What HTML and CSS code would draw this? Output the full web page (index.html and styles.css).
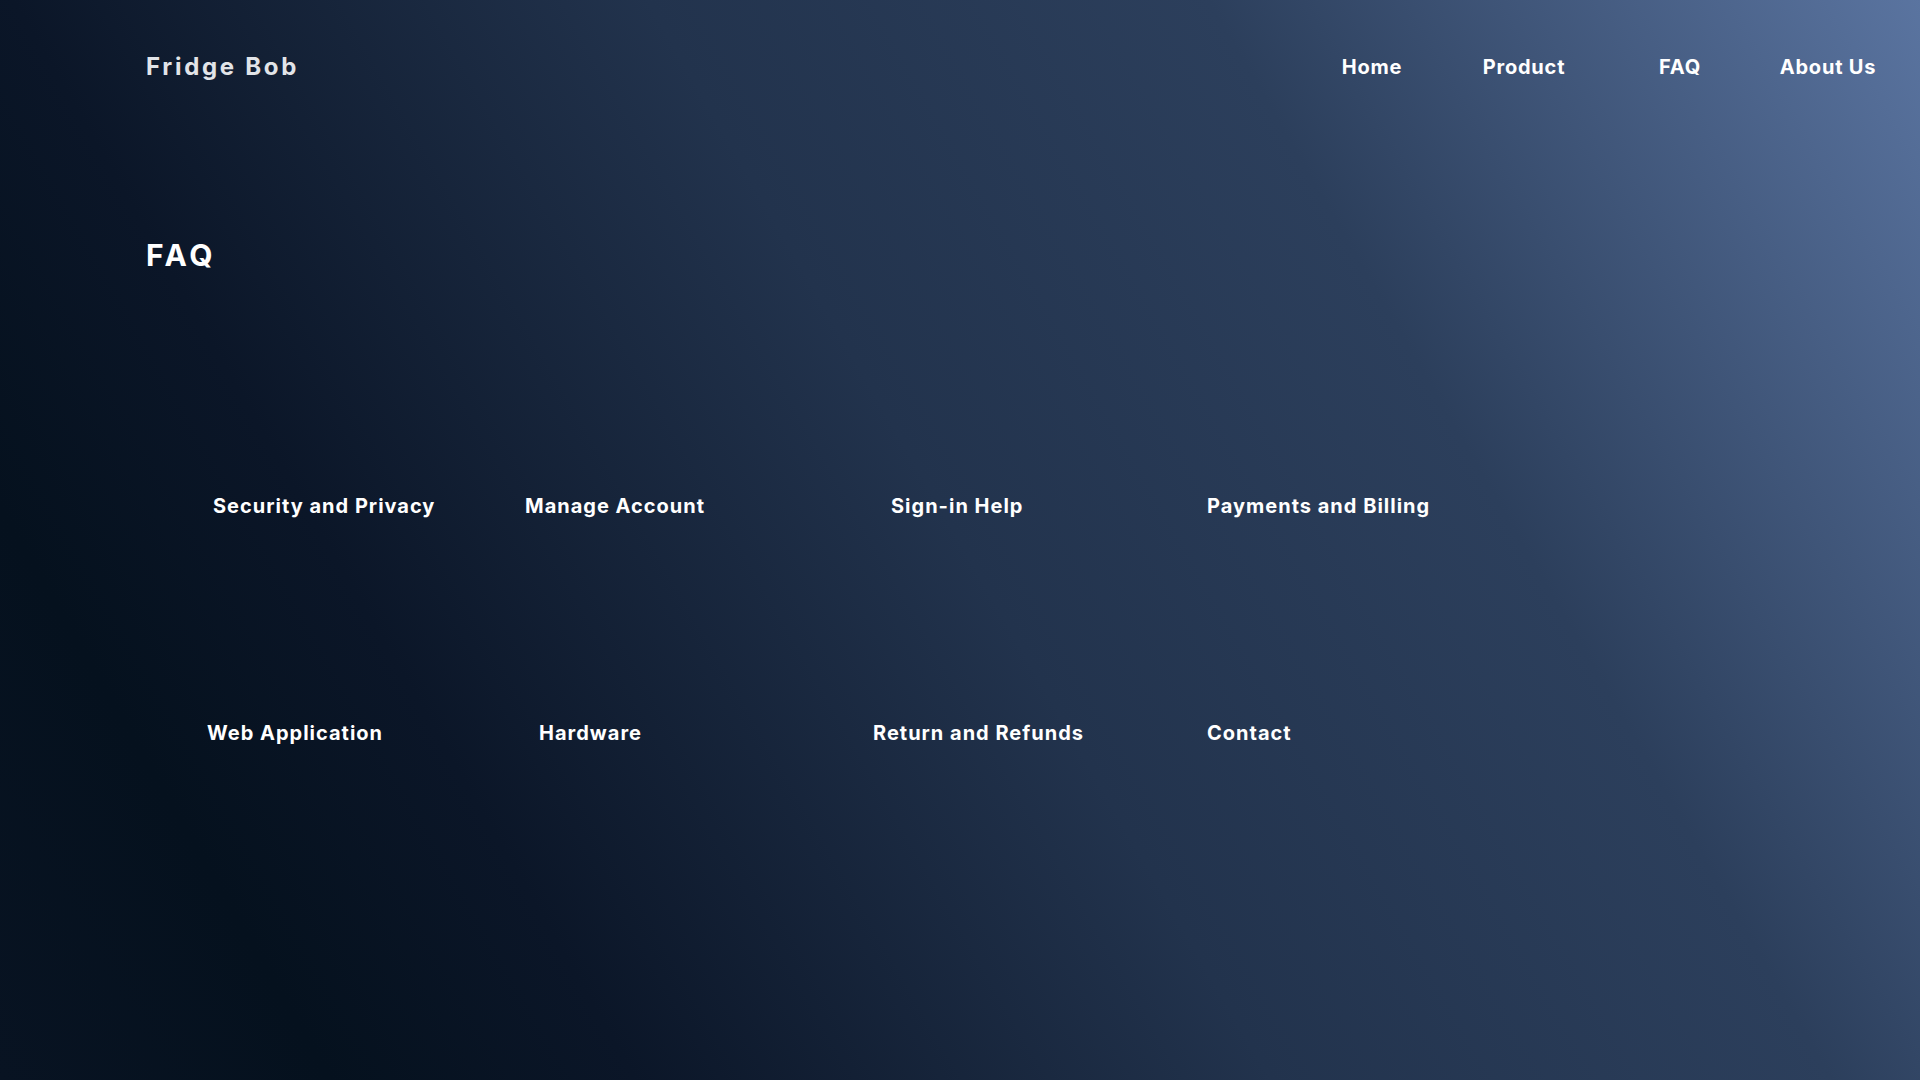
FILE: index.html
```html
<!DOCTYPE html>
<html lang="en">
<head>
<meta charset="utf-8">
<title>Fridge Bob - FAQ</title>
<link rel="stylesheet" href="styles.css">
</head>
<body>
<div class="page">
  <header class="topbar">
    <div class="logo">Fridge Bob</div>
    <nav class="nav">
      <a class="nav-link" href="#">Home</a>
      <a class="nav-link" href="#">Product</a>
      <a class="nav-link" href="#">FAQ</a>
      <a class="nav-link" href="#">About Us</a>
    </nav>
  </header>
  <main class="content">
    <h1 class="title">FAQ</h1>
    <div class="topics">
      <div class="row row-first">
        <a class="topic" href="#">Security and Privacy</a>
        <a class="topic" href="#">Manage Account</a>
        <a class="topic" href="#">Sign-in Help</a>
        <a class="topic" href="#">Payments and Billing</a>
      </div>
      <div class="row row-second">
        <a class="topic" href="#">Web Application</a>
        <a class="topic" href="#">Hardware</a>
        <a class="topic" href="#">Return and Refunds</a>
        <a class="topic" href="#">Contact</a>
      </div>
    </div>
  </main>
</div>
</body>
</html>
```
FILE: styles.css
```css
* { box-sizing: border-box; }
html, body { margin: 0; padding: 0; }
body {
  font-family: "Inter", "Open Sans", sans-serif;
  color: #ffffff;
  min-height: 1080px;
  background: linear-gradient(60deg, #081322 0%, #05111e 13%, #0b1628 25%, #22334d 50%, #2c3f5c 72%, #5a74a0 100%);
}
.page { height: 1080px; overflow: hidden; }
a { color: inherit; text-decoration: none; }
.topbar {
  display: flex;
  justify-content: space-between;
  align-items: flex-start;
  padding: 51px 16px 0 146px;
  height: 110px;
}
.logo {
  font-size: 24px;
  font-weight: 700;
  letter-spacing: 2.7px;
  color: #e2e4e8;
  line-height: 32px;
}
.nav { display: flex; }
.nav-link {
  width: 152px;
  text-align: center;
  font-size: 20px;
  font-weight: 700;
  letter-spacing: 0.8px;
  line-height: 32px;
}
.nav-link:nth-child(3) { padding-left: 8px; }
.content { padding: 0 0 0 146px; }
.title {
  margin: 127px 0 0;
  font-size: 30px;
  font-weight: 700;
  letter-spacing: 3.6px;
  line-height: 36px;
}
.topics { margin-top: 219px; display: flex; flex-direction: column; gap: 199px; }
.row { display: grid; }
.row-first { padding-left: 67px; grid-template-columns: 312px 366px 316px auto; }
.row-second { padding-left: 61px; grid-template-columns: 332px 334px 334px auto; }
.topic {
  font-size: 20px;
  font-weight: 700;
  letter-spacing: 1px;
  line-height: 28px;
  white-space: nowrap;
}
```
